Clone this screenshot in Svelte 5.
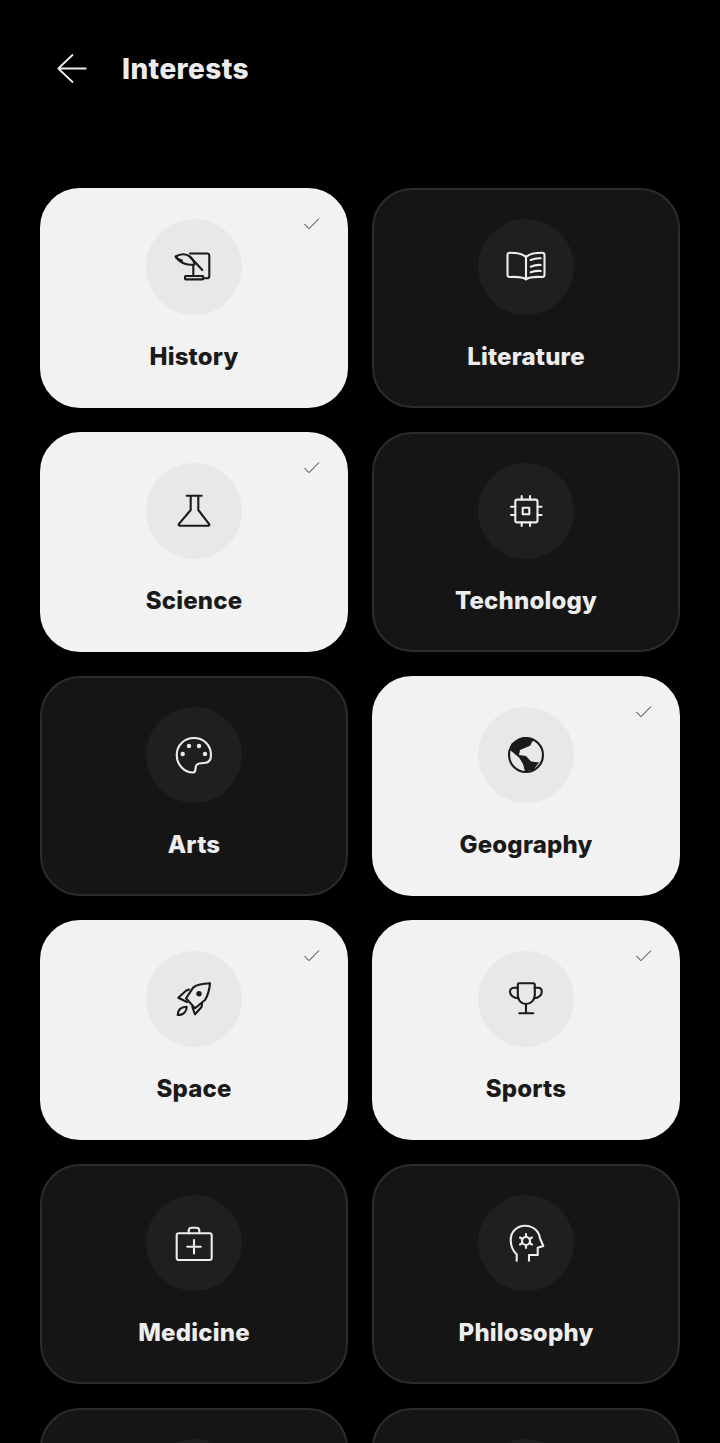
<script>
  // icons are drawn on a 40x40 box, stroke and fill inherited from the svg
  const icons = {
    history: `<path d="M16 6.500H33a2.300 2.300 0 0 1 2.300 2.300V29a2.300 2.300 0 0 1-2.300 2.300H29.500"/><path d="M16 9.700 28.300 23"/><path d="M19.300 18V29"/><rect x="11" y="29" width="18.300" height="3.400" rx=".8"/><path d="M1.700 9.700C6 6.500 12.500 6.500 16 9.700C19 12.500 20.500 15.500 20.500 17.500C15 18.500 6.500 17 1.700 9.700Z"/><path d="M1.700 9.700C3 12 5 13 8 13.500"/>`,
    literature: `<path d="M20 10C17 7 11 5.700 4 5.700Q1.500 5.700 1.500 8V28Q1.500 30 4 30C10 29.700 17 30 20 32.500C23 30 30 29.700 36 30Q38.500 30 38.500 28V8Q38.500 5.700 36 5.700C29 5.700 23 7 20 10V32"/><path d="M24.700 13Q30 10.800 34.700 11.300M24.700 19.700Q30 17.500 34.700 18M24.700 25.300Q30 23.500 34.700 24"/>`,
    science: `<path d="M12.700 4.700H27.700M16.700 4.700V19L4.800 33.200A1 1 0 0 0 5.500 34.700H34.500A1 1 0 0 0 35.200 33.200L24.300 19V4.700"/>`,
    technology: `<rect x="9.300" y="8.600" width="22.200" height="22.800" rx="2"/><rect x="16.700" y="16.700" width="6.600" height="6.600"/><path d="M15.700 5V8.600M24 5V8.600M15.700 31.400V35M24 31.400V35M5 15.700H9.300M5 24H9.300M31.500 15.700H35.500M31.500 24H35.500"/>`,
    arts: `<path d="M20 3C10 3 2.700 10.500 2.700 20C2.700 30 10.500 37.500 19 37.500C22.500 37.500 21 33 22 31C23 28.500 26 28 30 28C35 28 37 25 37 20C37 10.500 30 3 20 3Z"/><g fill="currentColor" stroke="none"><circle cx="15" cy="11" r="2.200"/><circle cx="25" cy="11" r="2.200"/><circle cx="8.700" cy="19" r="2.200"/><circle cx="31" cy="19" r="2.200"/></g>`,
    geography: `<circle cx="20" cy="20" r="17"/><path fill="currentColor" stroke="none" d="M4 15 5.700 8.300 17.300 2.300 27.300 5 24 10.700 14 15 13 20 20 21 25 26.500 33 27.500 27.300 35 19 36.500 17 29 13 22.500Z"/>`,
    space: `<path d="M36 4.300C30 4.500 24 5 19.300 8.300L12 19.300 21 29.300 31 21C34 16 35.500 10 36 4.300Z"/><path d="M15 10.500 12 11.700 4.300 18.700 13 23M28 24.500 27.700 27.700 21 35.300 18.300 28"/><circle cx="25" cy="14.700" r="2.700" fill="currentColor" stroke="none"/><path d="M3.700 36C3.700 31 6 28 12.700 27.700C12.700 32 10 36 3.700 36Z"/>`,
    sports: `<path d="M13.300 4.300H27.300A1.500 1.500 0 0 1 28.800 5.800V16C28.800 21 25 25 20 25C15 25 11.800 21 11.800 16V5.800A1.500 1.500 0 0 1 13.300 4.300Z"/><path d="M12 8.700H8C5.500 8.700 4 10.500 4 12.700C4 16 7.500 19.300 12.500 19.300M28.500 8.700H32C34.500 8.700 35.800 10.500 35.800 12.700C35.800 16 32.500 19.300 28 19.300"/><path d="M20 25V34.300M13.300 34.300H27.300"/>`,
    medicine: `<rect x="2.700" y="10.300" width="35" height="26.700" rx="2"/><path d="M14.700 10.300V7.500A2.800 2.800 0 0 1 17.500 4.700H22.500A2.800 2.800 0 0 1 25.300 7.500V10.300"/><path d="M20 17V30.500M13.300 23.700H26.700"/>`,
    philosophy: `<path d="M10.700 37.700V31.300C7 28 4.700 23 4.700 17C4.700 9 11 2.700 19 2.700C27 2.700 33 8 34 15.300L37.300 23L31.700 24.700V32H23V37.700"/><circle cx="20" cy="18" r="4"/><path d="M20 11V14M20 22V25M14 14.500 16.500 16M23.500 20 26 21.500M14 21.500 16.500 20M23.500 16 26 14.500"/>`
  }

  const topics = [
    { name: 'History', icon: 'history', on: true },
    { name: 'Literature', icon: 'literature', on: false },
    { name: 'Science', icon: 'science', on: true },
    { name: 'Technology', icon: 'technology', on: false },
    { name: 'Arts', icon: 'arts', on: false },
    { name: 'Geography', icon: 'geography', on: true },
    { name: 'Space', icon: 'space', on: true },
    { name: 'Sports', icon: 'sports', on: true },
    { name: 'Medicine', icon: 'medicine', on: false },
    { name: 'Philosophy', icon: 'philosophy', on: false },
    { name: '', icon: '', on: false },
    { name: '', icon: '', on: false }
  ]
</script>

<div class="page">
  <header class="top">
    <svg class="back" width="30" height="30" viewBox="0 0 30 30" fill="none" stroke="currentColor" stroke-width="1.800" stroke-linecap="round" stroke-linejoin="round">
      <path d="M1.300 14.500H28.700M15.500 1 1.300 14.500 15.500 28"/>
    </svg>
    <h1>Interests</h1>
  </header>

  <div class="grid">
    {#each topics as topic}
      <div class="card" class:on={topic.on}>
        {#if topic.on}
          <svg class="check" width="18" height="14" viewBox="0 0 18 14" fill="none" stroke="currentColor" stroke-width="0.900">
            <path d="M1.500 7 6 11.700 16 1.500"/>
          </svg>
        {/if}
        <div class="circle">
          {#if topic.icon}
            <svg width="40" height="40" viewBox="0 0 40 40" fill="none" stroke="currentColor" stroke-width="2.100" stroke-linecap="round" stroke-linejoin="round">
              {@html icons[topic.icon]}
            </svg>
          {/if}
        </div>
        {#if topic.name}
          <div class="label">{topic.name}</div>
        {/if}
      </div>
    {/each}
  </div>
</div>

<style>
  :global(body) {
    background: #000;
  }

  .page {
    height: 1443px;
    overflow: hidden;
    background: #000;
    font-family: Inter, 'Liberation Sans', sans-serif;
  }

  .top {
    display: flex;
    align-items: center;
    height: 138px;
    margin-bottom: 50px;
    padding-left: 57px;
    color: #ececec;
  }

  .back {
    margin-right: 35px;
  }

  h1 {
    margin: 0;
    font-size: 28px;
    font-weight: 800;
    letter-spacing: 0.4px;
  }

  .grid {
    display: grid;
    grid-template-columns: 308px 308px;
    gap: 24px;
    padding: 0 40px;
  }

  .card {
    position: relative;
    display: flex;
    flex-direction: column;
    align-items: center;
    box-sizing: border-box;
    height: 220px;
    padding-top: 29px;
    border: 2px solid #2c2c2c;
    border-radius: 40px;
    background: #151515;
    color: #ededed;
  }

  .card.on {
    border-color: #f2f2f2;
    background: #f2f2f2;
    color: #1a1a1a;
  }

  .check {
    position: absolute;
    top: 27px;
    right: 25px;
  }

  .circle {
    display: flex;
    align-items: center;
    justify-content: center;
    flex-shrink: 0;
    width: 96px;
    height: 96px;
    border-radius: 50%;
    background: #1f1f1f;
  }

  .card.on .circle {
    background: #e8e8e8;
  }

  .label {
    margin-top: 27px;
    font-size: 24px;
    font-weight: 800;
    line-height: 30px;
    letter-spacing: 0.2px;
  }
</style>
